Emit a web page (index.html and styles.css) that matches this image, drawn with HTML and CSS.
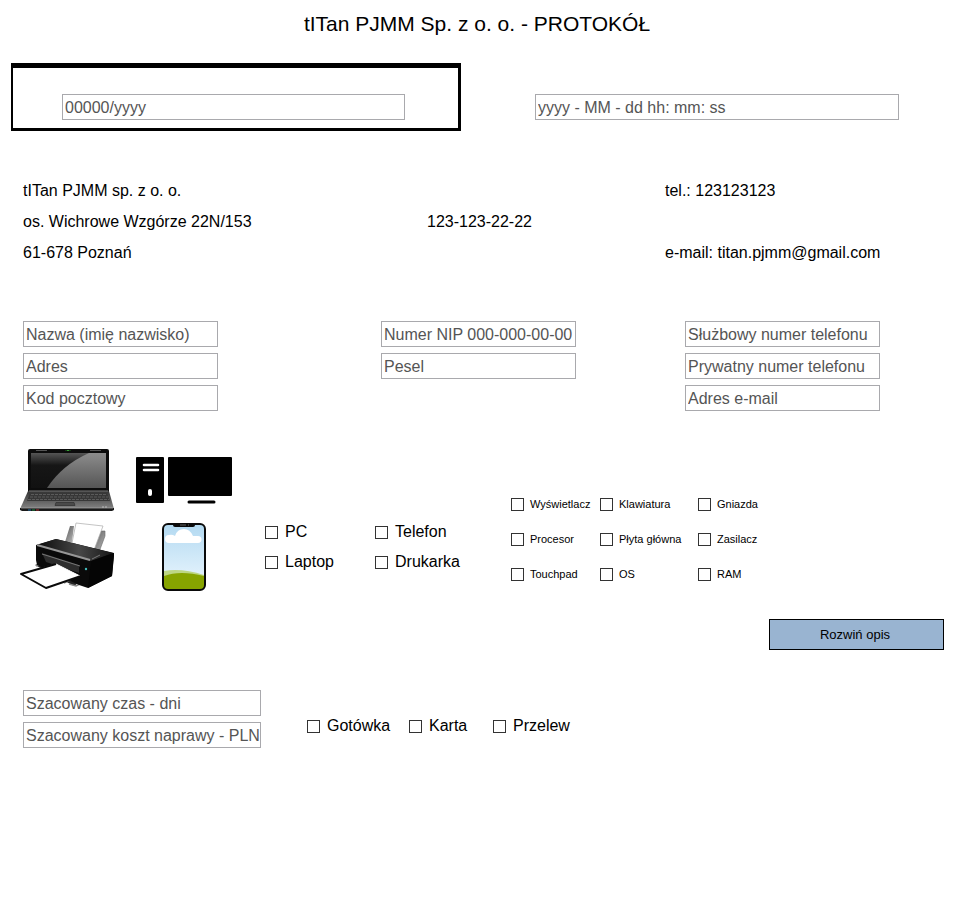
FILE: index.html
```html
<!DOCTYPE html>
<html lang="pl">
<head>
<meta charset="utf-8">
<meta name="viewport" content="width=device-width, initial-scale=1">
<title>tITan PJMM Sp. z o. o. - PROTOKÓŁ</title>
<link rel="stylesheet" href="styles.css">
</head>
<body>
<h1 class="title">tITan PJMM Sp. z o. o. - PROTOKÓŁ</h1>
<form class="protocol">
  <div class="heading">
    <div class="number-box"><input class="field" type="text" placeholder="00000/yyyy" aria-label="Numer protokołu"></div>
    <div class="date-box"><input class="field" type="text" placeholder="yyyy - MM - dd hh: mm: ss" aria-label="Data"></div>
  </div>

  <div class="company">
    <div>
      <p>tITan PJMM sp. z o. o.</p>
      <p>os. Wichrowe Wzgórze 22N/153</p>
      <p>61-678 Poznań</p>
    </div>
    <p class="company-nip">123-123-22-22</p>
    <div class="company-contact">
      <p>tel.: 123123123</p>
      <p>e-mail: titan.pjmm@gmail.com</p>
    </div>
  </div>

  <div class="client">
    <div class="stack">
      <input class="field" type="text" placeholder="Nazwa (imię nazwisko)" aria-label="Nazwa (imię nazwisko)">
      <input class="field" type="text" placeholder="Adres" aria-label="Adres">
      <input class="field" type="text" placeholder="Kod pocztowy" aria-label="Kod pocztowy">
    </div>
    <div class="stack">
      <input class="field" type="text" placeholder="Numer NIP 000-000-00-00" aria-label="Numer NIP">
      <input class="field" type="text" placeholder="Pesel" aria-label="Pesel">
    </div>
    <div class="stack">
      <input class="field" type="tel" placeholder="Służbowy numer telefonu" aria-label="Służbowy numer telefonu">
      <input class="field" type="tel" placeholder="Prywatny numer telefonu" aria-label="Prywatny numer telefonu">
      <input class="field" type="email" placeholder="Adres e-mail" aria-label="Adres e-mail">
    </div>
  </div>

  <div class="equipment">
    <div class="pictures">
      <svg width="96" height="64" viewBox="0 0 96 64" aria-hidden="true">
        <defs>
          <linearGradient id="deck" x1="0" y1="0" x2="0" y2="1"><stop offset="0" stop-color="#333"/><stop offset="1" stop-color="#858585"/></linearGradient>
          <linearGradient id="screen" x1="0" y1="0" x2="0" y2="1"><stop offset="0" stop-color="#555"/><stop offset=".35" stop-color="#161616"/><stop offset="1" stop-color="#111"/></linearGradient>
          <linearGradient id="glare" x1="0" y1="0" x2="0" y2="1"><stop offset="0" stop-color="#8c8c8c"/><stop offset="1" stop-color="#555"/></linearGradient>
        </defs>
        <path d="M9 3q0-2 2-2h77q2 0 2 2v40H9z" fill="#0c0c0c"/>
        <path d="M12 5h75v35H12z" fill="url(#screen)"/>
        <path d="M28 40Q43 17 70 5h17v35z" fill="url(#glare)"/>
        <path d="M17 2.500h11M71 2.500h11" stroke="#555" stroke-width="1"/>
        <path d="M46 2.500h6" stroke="#173d17"/><path d="M48 2.500h2" stroke="#39a339"/>
        <path d="M9 43h81l5 18H1z" fill="url(#deck)"/>
        <path d="M10 43h79" stroke="#777"/>
        <path d="M11 45h77l3 8H8z" fill="#373737"/>
        <path d="M12 46.500h76M11 49h78M9 51.500h81" stroke="#6b6b6b" stroke-width=".7" stroke-dasharray="3 1"/>
        <path d="M37 54.500h18l1 3H36z" fill="#4a4a4a" stroke="#333" stroke-width=".8"/>
        <path d="M1 60h94v2l-2 1H3l-2-1z" fill="#1a1a1a"/>
        <path d="M2 60h92" stroke="#a0a0a0" stroke-width=".8"/>
        <path d="M9 62h3" stroke="#216ca5"/><path d="M13 62h3" stroke="#1b8b40"/><path d="M17 62h3" stroke="#ad2d30"/>
        <path d="M83 59h5" stroke="#bbb" stroke-dasharray="2 1"/>
      </svg>
      <svg width="98" height="48" viewBox="0 0 98 48" aria-hidden="true">
        <rect x="1" y="1" width="28" height="46" rx="1"/>
        <rect x="33" y="1" width="64" height="39" rx="1"/>
        <path d="M54 46h25" stroke="#000" stroke-width="3" stroke-linecap="round"/>
        <path d="M9 9h14M9 14h14" stroke="#fff" stroke-width="2.600" stroke-linecap="round"/>
        <path d="M15 35v3" stroke="#fff" stroke-width="4" stroke-linecap="round"/>
      </svg>
      <svg width="96" height="69" viewBox="0 0 96 69" aria-hidden="true">
        <defs>
          <linearGradient id="lid" x1="0" y1="0" x2="1" y2="0"><stop offset="0" stop-color="#090909"/><stop offset=".55" stop-color="#484848"/><stop offset="1" stop-color="#161616"/></linearGradient>
          <linearGradient id="guide" x1="0" y1="0" x2="1" y2="1"><stop offset="0" stop-color="#555"/><stop offset="1" stop-color="#bbb"/></linearGradient>
        </defs>
        <path d="M51 4h4l-2 16h-7z" fill="url(#guide)"/>
        <path d="M82 9h4v5L80 30l-7-2z" fill="url(#guide)" stroke="#666" stroke-width=".6"/>
        <path d="M57 1l27 3-9 24-22-7z" fill="#fff" stroke="#aaa" stroke-width=".7"/>
        <path d="M16 43l8-3 36 14 2 5-7 5z" fill="#222"/>
        <path d="M17 44l6-2M45 61l6-3M50 62l7 2 6-3" stroke="#888" stroke-width="1.500" fill="none"/>
        <path d="M17 23l20-6 58 14v3l-2 20-24 12-9-3-42-20-1-5z" fill="#0a0a0a"/>
        <path d="M18 23l19-6 57 14-22 8z" fill="url(#lid)"/>
        <path d="M18 23l53 15" stroke="#969696" stroke-width="2"/>
        <path d="M73 37l8-4" stroke="#777" stroke-width="1"/>
        <path d="M23 31l37 12v8L27 40z" fill="#2d2d2d"/>
        <path d="M23 32l38 12" stroke="#777" stroke-width="1"/>
        <path d="M72 39l-3 27 24-12 2-23z" fill="#050505"/>
        <path d="M2 52l35-10 24 12-34 13z" fill="#fff" stroke="#fff" stroke-linejoin="round"/>
        <path d="M37 42L2 52l25 14 35-12" fill="none" stroke="#0a0a0a" stroke-width="2" stroke-linejoin="round"/>
        <circle cx="67" cy="47" r="1.200" fill="#4bb"/>
      </svg>
      <svg width="44" height="69" viewBox="0 0 44 69" aria-hidden="true">
        <defs>
          <linearGradient id="sky" x1="0" y1="0" x2="0" y2="1"><stop offset="0" stop-color="#b2d9f1"/><stop offset="1" stop-color="#eef8ff"/></linearGradient>
        </defs>
        <rect x="1" y="2" width="42" height="66" rx="5" fill="url(#sky)"/>
        <path d="M2 49q18-3 40 4v14H2z" fill="#bdd684"/>
        <path d="M2 54q16-6 40 0v13H2z" fill="#87a400"/>
        <path d="M7 21a4 4 0 0 1 0-8q3-1 6 1 2-7 9-7 6 0 9 7h5a3 3 0 0 1 0 7z" fill="#fff"/>
        <rect x="1" y="2" width="42" height="66" rx="5" fill="none" stroke="#0a0a0a" stroke-width="2"/>
        <path d="M11 1h22v2q0 2-2 2H13q-2 0-2-2z" fill="#0a0a0a"/>
        <path d="M18 3h6M26 3h1" stroke="#777" stroke-width=".8"/>
      </svg>
    </div>

    <div class="devices">
      <label class="check"><input type="checkbox">PC</label>
      <label class="check"><input type="checkbox">Telefon</label>
      <label class="check"><input type="checkbox">Laptop</label>
      <label class="check"><input type="checkbox">Drukarka</label>
    </div>

    <div class="parts">
      <label class="check"><input type="checkbox">Wyświetlacz</label>
      <label class="check"><input type="checkbox">Klawiatura</label>
      <label class="check"><input type="checkbox">Gniazda</label>
      <label class="check"><input type="checkbox">Procesor</label>
      <label class="check"><input type="checkbox">Płyta główna</label>
      <label class="check"><input type="checkbox">Zasilacz</label>
      <label class="check"><input type="checkbox">Touchpad</label>
      <label class="check"><input type="checkbox">OS</label>
      <label class="check"><input type="checkbox">RAM</label>
    </div>
  </div>

  <div class="actions"><button class="expand" type="button">Rozwiń opis</button></div>

  <div class="summary">
    <div class="stack estimate">
      <input class="field" type="text" placeholder="Szacowany czas - dni" aria-label="Szacowany czas - dni">
      <input class="field" type="text" placeholder="Szacowany koszt naprawy - PLN" aria-label="Szacowany koszt naprawy - PLN">
    </div>
    <div class="payment">
      <label class="check"><input type="checkbox">Gotówka</label>
      <label class="check"><input type="checkbox">Karta</label>
      <label class="check"><input type="checkbox">Przelew</label>
    </div>
  </div>
</form>
</body>
</html>
```

FILE: styles.css
```css
* {
  box-sizing: border-box;
}

body {
  margin: 0;
  background: #fff;
  color: #000;
  font: 16px/20px "Liberation Sans", Arial, sans-serif;
}

p {
  margin: 0;
  line-height: 31px;
}

.title {
  margin: 0;
  padding: 10px 6px 25px 0;
  font-size: 21px;
  font-weight: 400;
  line-height: 28px;
  text-align: center;
}

.field {
  display: block;
  width: 100%;
  height: 26px;
  padding: 2px 0 0 2px;
  border: 1px solid #a9a9ad;
  border-radius: 0;
  background: #fff;
  color: #000;
  font: inherit;
}

.field::placeholder {
  color: #555;
  opacity: 1;
}

.heading {
  display: grid;
  grid-template-columns: 450fr 488fr;
  align-items: end;
  padding: 0 11px;
}

.number-box {
  padding: 26px 53px 8px 49px;
  border: solid #000;
  border-width: 5px 3px 3px 2px;
}

.date-box {
  padding: 0 50px 11px 74px;
}

.company {
  display: grid;
  grid-template-columns: 404fr 238fr 272fr;
  margin-top: 44px;
  padding: 0 23px;
}

.company-nip {
  align-self: center;
}

.company-contact {
  display: flex;
  flex-direction: column;
  justify-content: space-between;
}

.client {
  display: grid;
  grid-template-columns: 358fr 304fr 252fr;
  margin-top: 53px;
  padding: 0 23px;
}

.stack {
  display: flex;
  flex-direction: column;
  gap: 6px;
}

.client .field {
  width: 195px;
}

.equipment {
  display: grid;
  grid-template-columns: 246fr 246fr 438fr;
  margin-top: 37px;
  padding: 0 11px 0 19px;
}

.pictures {
  display: grid;
  grid-template-columns: 96px 98px;
  gap: 10px 20px;
  align-items: center;
  justify-items: center;
  justify-content: start;
}

.devices {
  display: grid;
  grid-template-columns: 110px auto;
  grid-auto-rows: 30px;
  justify-content: start;
  padding-top: 69px;
}

.parts {
  display: grid;
  grid-template-columns: 89px 98px auto;
  grid-auto-rows: 20px;
  row-gap: 15px;
  justify-content: start;
  padding-top: 46px;
  font-size: 11px;
}

.check {
  display: flex;
  align-items: center;
  gap: 7px;
}

.parts .check {
  gap: 6px;
}

.check input {
  appearance: none;
  flex: none;
  width: 13px;
  height: 13px;
  margin: 0;
  border: 1px solid #333;
  background: #fff;
}

.check input:checked {
  background: #333;
  box-shadow: inset 0 0 0 2px #fff;
}

.actions {
  display: flex;
  justify-content: flex-end;
  margin-top: 28px;
  padding: 0 16px;
}

.expand {
  width: 175px;
  height: 31px;
  padding: 0 3px 0 0;
  border: 1px solid #000;
  background: #99b4d1;
  color: #000;
  font: 13px/20px "Liberation Sans", Arial, sans-serif;
}

.summary {
  display: flex;
  align-items: center;
  gap: 46px;
  margin-top: 40px;
  padding: 0 23px;
}

.estimate {
  width: 238px;
}

.payment {
  display: grid;
  grid-template-columns: 102px 84px auto;
  padding-top: 14px;
}
```
